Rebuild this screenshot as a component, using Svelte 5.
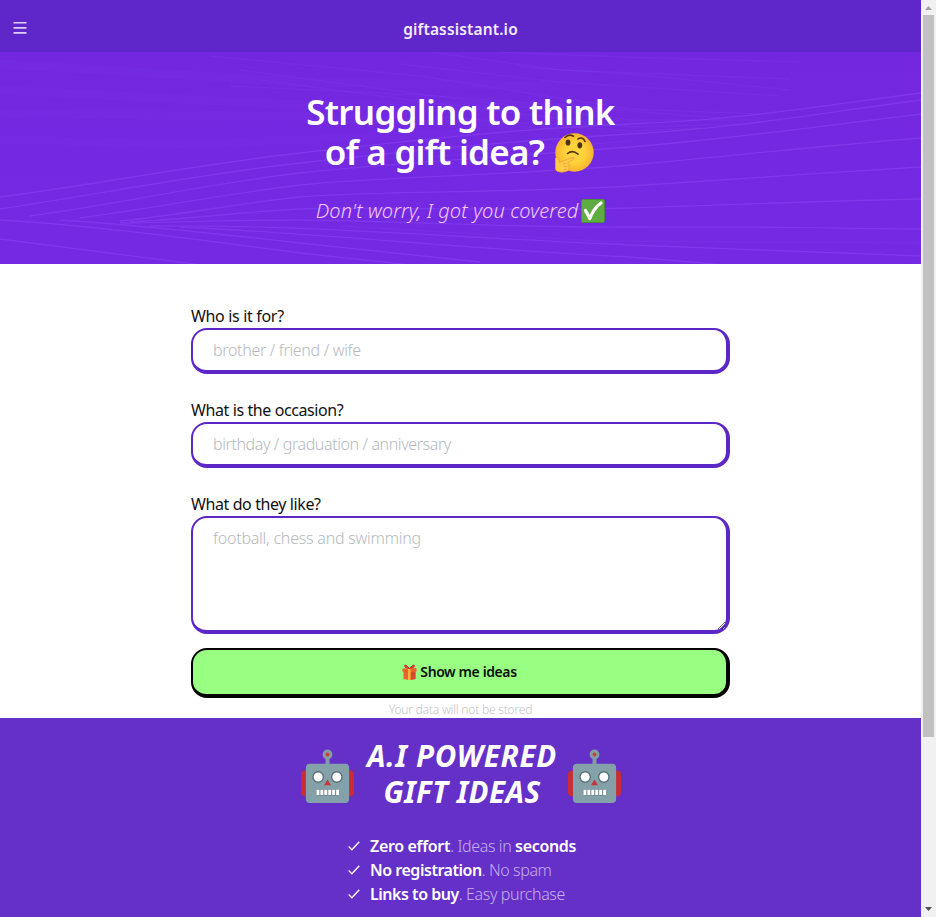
<script>
  const fields = [
    { id: 'who', label: 'Who is it for?', hint: 'brother / friend / wife' },
    { id: 'occasion', label: 'What is the occasion?', hint: 'birthday / graduation / anniversary' }
  ];
  const perks = [
    { strong: 'Zero effort', text: '. Ideas in ', end: 'seconds' },
    { strong: 'No registration', text: '. No spam', end: '' },
    { strong: 'Links to buy', text: '. Easy purchase', end: '' }
  ];
  const waves = [
    'M0 145C100 132 200 112 300 101S520 76 630 72 820 54 921 41',
    'M0 157C100 142 200 122 300 111S520 88 630 82 820 61 921 48',
    'M30 164C120 152 210 131 300 121S520 104 630 95 820 74 921 62',
    'M80 166C150 157 230 141 300 133S520 123 630 113 820 94 921 86',
    'M120 169C180 163 240 151 300 145S520 141 630 134 820 121 921 115',
    'M130 170C190 167 240 160 300 157S520 160 630 156 820 149 921 147',
    'M120 171C180 170 240 168 300 168S520 176 630 175 820 176 921 177',
    'M0 168C100 174 200 188 300 201L420 214',
    'M60 168C140 173 220 182 300 191L480 210',
    'M0 187L210 214',
    'M150 174C300 172 480 187 630 193L921 204',
    'M180 175C330 182 480 198 630 205L740 214'
  ];
  const faint = [
    'M210 4L420 24L630 57L760 62', 'M240 18L420 42L630 68L760 68',
    'M260 28L440 52L630 75L740 72', 'M230 34L440 44L720 66',
    'M430 64L630 79L700 76', 'M430 0L560 18L790 27',
    'M500 0L620 5L800 10', 'M520 15L640 23L790 38',
    'M400 12L560 30L780 44', 'M430 105L630 89', 'M340 174L600 189L921 191'
  ];
  const bands = ['M0 12L300 30L560 34', 'M0 38L280 52L600 56', 'M0 62L300 64L560 76', 'M0 88L200 92L480 80'];
</script>

{#snippet robot()}
  <svg class="robot" viewBox="0 0 54 56" aria-hidden="true">
    <rect x="0" y="22" width="12" height="26" rx="4" fill="#c62d35" />
    <rect x="42" y="22" width="12" height="26" rx="4" fill="#c62d35" />
    <path d="M27 7v10" stroke="#829da7" stroke-width="4" />
    <circle cx="27" cy="5.5" r="3.5" fill="#d13a36" stroke="#829da7" stroke-width="3" />
    <rect x="5" y="15" width="44" height="40" rx="4" fill="#84a0a8" />
    <circle cx="17.5" cy="28.5" r="5.3" fill="#fff" stroke="#596f77" stroke-width="1.4" />
    <circle cx="36.5" cy="28.5" r="5.3" fill="#fff" stroke="#596f77" stroke-width="1.4" />
    <path d="m27 31 3.5 6h-7z" fill="#c63539" />
    <rect x="15" y="41" width="24" height="6.5" rx="3" fill="#718b94" />
    <path d="M15.8 44.2h23" stroke="#fff" stroke-width="5.4" stroke-dasharray="2.9 1.1" />
  </svg>
{/snippet}

<div class="window">
  <div class="page">
    <header>
      <svg class="menu" viewBox="0 0 14 12" aria-hidden="true"><path d="M.5 0h13v1.6H.5zM.5 5h13v1.7H.5zM.5 10h13v1.7H.5z" fill="#decff8" /></svg>
      <span class="brand">giftassistant.io</span>
    </header>

    <section class="hero">
      <svg class="lines" viewBox="0 0 921 212" preserveAspectRatio="none" aria-hidden="true">
        <g fill="none" stroke="#8644f2" stroke-width="1.3">
          {#each bands as d}<path {d} stroke-width="9" stroke-opacity=".09" />{/each}
          {#each waves as d}<path {d} stroke-opacity=".55" />{/each}
          {#each faint as d}<path {d} stroke-opacity=".2" />{/each}
        </g>
      </svg>
      <h1>
        <span class="l1">Struggling to think</span>
        <span class="l2"><span>of a gift idea?</span>
          <svg class="think" viewBox="0 0 40 40" aria-hidden="true">
            <defs><radialGradient id="face"><stop offset=".5" stop-color="#ffd33b" /><stop offset="1" stop-color="#f6b42d" /></radialGradient></defs>
            <circle cx="20.5" cy="19.5" r="19.2" fill="url(#face)" />
            <ellipse cx="14" cy="9.5" rx="2.4" ry="3.1" fill="#4b3312" />
            <ellipse cx="25.8" cy="12.3" rx="2.4" ry="3.1" fill="#4b3312" />
            <path d="M11 4.5q4-4 8.5-1.3M24 6q5-2.8 7 2.5M13.5 20.5q5-4 10.5.7" fill="none" stroke="#543510" stroke-width="1.6" stroke-linecap="round" />
            <path d="M1.5 25q1.5-2 3 1l1 3.5 12.5-5q3-.5 2 1.5l-6.5 4 1 1q2 5-1 7-5 2-10 .5-3-2-2-6z" fill="#ffc94a" stroke="#f0a036" stroke-width=".8" />
            <path d="m9 31 3-.5M10 33.5h3.5M10 36.3h3" stroke="#f0a036" stroke-width=".8" />
          </svg>
        </span>
      </h1>
      <p class="sub"><span>Don't worry, I got you covered</span>
        <svg class="check" viewBox="0 0 24 24" aria-hidden="true"><rect x=".5" y=".5" width="23" height="23" rx="1.5" fill="#5fad42" stroke="#488b39" /><path d="m4.5 11.5 4.3 8Q12.5 9.5 20 4" fill="none" stroke="#fff" stroke-width="3.2" stroke-linecap="round" stroke-linejoin="round" /></svg>
      </p>
    </section>

    <form>
      {#each fields as f}
        <div class="field {f.id}">
          <label for={f.id}>{f.label}</label>
          <input id={f.id} placeholder={f.hint} />
        </div>
      {/each}
      <div class="field likes">
        <label for="likes">What do they like?</label>
        <textarea id="likes" placeholder="football, chess and swimming"></textarea>
      </div>
      <button type="button">
        <svg class="gift" viewBox="0 0 15 16" aria-hidden="true">
          <path d="M.5 4.5 14.5 4v3.5l-1 .5v7L7 16l-5.5-1V8l-1-.5z" fill="#f0602d" />
          <path d="M8 8h5.5v7L8 16z" fill="#da482c" />
          <path d="M6 4h2.6v12H6z" fill="#f9b938" />
          <path d="M7.5 4.5Q3-.5 2.5 1.7T7.5 4.5Q12-.5 12.5 1.7T7.5 4.5" fill="#ee3f35" stroke="#d02a2c" />
        </svg><span>Show me ideas</span>
      </button>
      <small>Your data will not be stored</small>
    </form>

    <section class="info">
      <div class="title">
        {@render robot()}
        <h2><span class="t1">A.I POWERED</span><span class="t2">GIFT IDEAS</span></h2>
        {@render robot()}
      </div>
      <ul>
        {#each perks as p}
          <li>
            <svg viewBox="0 0 12 10" aria-hidden="true"><path d="m.7 5.5 3.2 3.2L11.3.8" fill="none" stroke="#fff" stroke-width="1.4" /></svg>
            <span><b>{p.strong}</b>{p.text}{#if p.end}<b>{p.end}</b>{/if}</span>
          </li>
        {/each}
      </ul>
    </section>
  </div>

  <div class="scroll">
    <svg viewBox="0 0 15 15" aria-hidden="true"><path d="M4 10h7L7.5 6z" fill="#a3a3a3" /></svg>
    <div class="thumb"></div>
    <svg viewBox="0 0 15 15" aria-hidden="true"><path d="M4 5h7L7.5 9z" fill="#505050" /></svg>
  </div>
</div>

<style>
  :global(body) { margin: 0; overflow: hidden; }
  .window, .window * { box-sizing: border-box; }
  .window { display: flex; width: 936px; height: 917px; overflow: hidden; font: 16px/24px "Noto Sans", sans-serif; }
  .page { width: 921px; height: 917px; display: flex; flex-direction: column; background: #fff; }
  svg { display: block; flex: none; }
  span { white-space: nowrap; }
  header { display: grid; grid-template-columns: 40px 1fr 40px; align-items: center; height: 52px; padding-top: 4px; background: #5f26ca; color: #f4ebff; flex: none; }
  .menu { width: 14px; height: 12px; margin-left: 13px; }
  .brand { justify-self: center; font-weight: 650; font-size: 15.5px; letter-spacing: .15px; padding-top: 1px; }
  .hero { position: relative; height: 212px; padding-top: 40px; background: linear-gradient(#7328e0, #7429e3); color: #fff; text-align: center; flex: none; }
  .lines { position: absolute; inset: 0; width: 100%; height: 100%; }
  h1 { position: relative; margin: 0; font-size: 35px; line-height: 40px; font-weight: 650; letter-spacing: -.73px; display: flex; flex-direction: column; align-items: center; }
  h1 > span { line-height: 40px; }
  .l2 { display: flex; align-items: center; gap: 10px; height: 40px; margin-right: 2px; }
  .think { width: 40px; height: 40px; margin-top: 1px; }
  .sub { position: relative; margin: 25px 0 0; display: flex; justify-content: center; align-items: center; gap: 3px; font-size: 20px; line-height: 28px; font-style: italic; font-weight: 300; letter-spacing: .12px; color: #f2c9fb; }
  .check { width: 24px; height: 24px; }
  form { width: 539px; height: 454px; margin: 0 auto; padding-top: 40px; display: flex; flex-direction: column; flex: none; }
  .field { display: flex; flex-direction: column; margin-bottom: 24px; }
  .likes { margin-bottom: 14px; }
  label { height: 24px; color: #111; letter-spacing: -.4px; }
  .who label { letter-spacing: -.33px; }
  input, textarea { width: 100%; border: solid #5d26c7; border-width: 2px 4px 4px 2px; border-radius: 16px; padding: 8px 20px; font: 300 16px/24px "Noto Sans", sans-serif; background: #fff; outline: 0; }
  input { height: 46px; letter-spacing: -.32px; }
  #occasion { letter-spacing: -.4px; }
  textarea { height: 118px; display: block; resize: vertical; letter-spacing: -.22px; }
  input::placeholder, textarea::placeholder { color: #b5b9c0; opacity: 1; }
  button { display: flex; justify-content: center; align-items: center; gap: 3px; height: 50px; padding: 0; border: solid #000; border-width: 2px 4px 4px 2px; border-radius: 16px; background: #98ff82; color: #071007; font: 650 14px/20px "Noto Sans", sans-serif; letter-spacing: -.4px; }
  .gift { width: 15px; height: 16px; }
  small { font-size: 12px; line-height: 16px; margin-top: 4px; text-align: center; color: #c3c3cb; font-weight: 300; letter-spacing: -.2px; }
  .info { flex: 1; background: #6430c8; color: #fff; padding-top: 20px; }
  .title { display: flex; justify-content: center; align-items: center; gap: 10px; height: 72px; }
  .robot { width: 53px; height: 55px; margin-top: 4px; }
  h2 { margin: 0; font-size: 29.5px; line-height: 36px; font-style: italic; font-weight: 700; width: 194px; display: flex; flex-direction: column; align-items: center; }
  .t1 { letter-spacing: .75px; margin-left: 3px; }
  .t2 { letter-spacing: .5px; margin-left: 3px; }
  ul { list-style: none; margin: 24px 0 0 348px; padding: 0; color: #c9adef; font-weight: 300; letter-spacing: -.38px; }
  li { display: flex; align-items: center; gap: 10px; height: 24px; }
  li svg { width: 12px; height: 10px; }
  b { color: #fff; font-weight: 650; letter-spacing: -.47px; }
  li:first-child b { letter-spacing: -.33px; }
  .scroll { width: 15px; height: 917px; background: #f1f1f1; display: flex; flex-direction: column; }
  .scroll svg { width: 15px; height: 15px; }
  .thumb { width: 11px; height: 722px; margin: 0 2px 165px; background: #c1c1c1; flex: none; }
</style>
